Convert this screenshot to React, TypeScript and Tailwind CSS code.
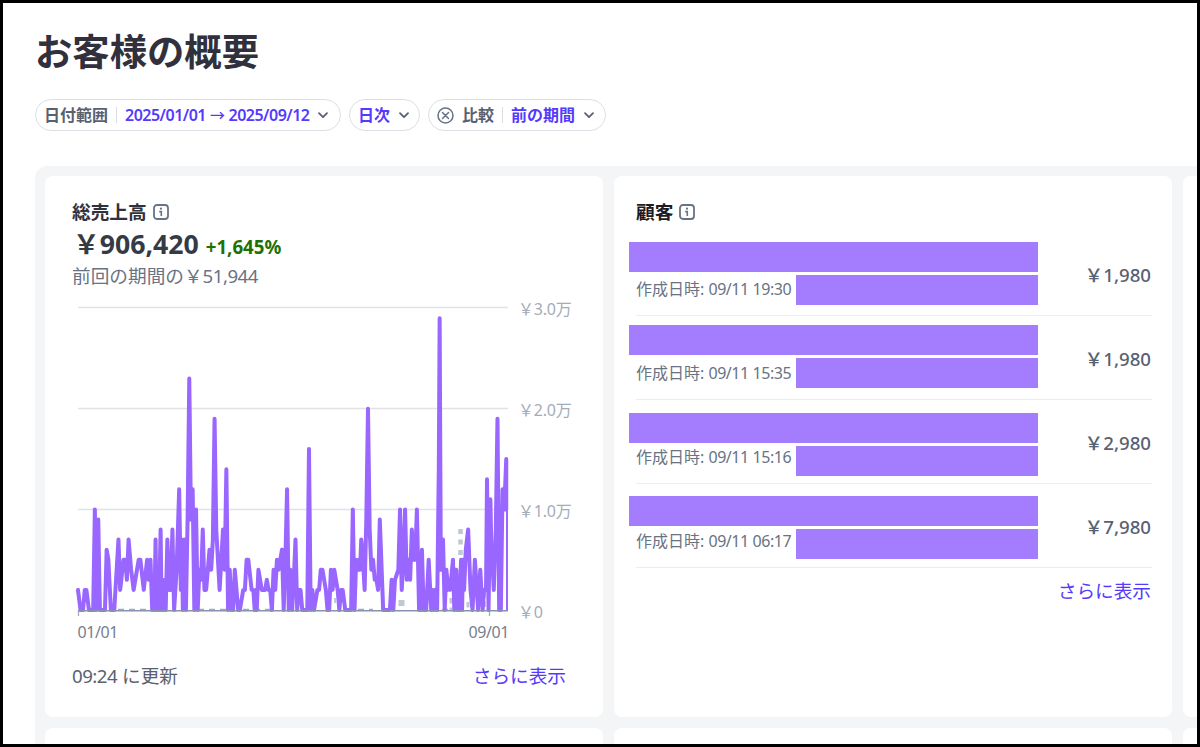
import type { ReactNode } from "react";

// [day index, sales in thousands of yen]
const SALES: [number, number][] = [
  [0, 2], [1.5, 0], [3, 0], [4, 2], [5, 2], [6.5, 0], [9, 0], [10, 10], [10.6, 0], [11.3, 8], [12, 9],
  [13, 0], [16, 0], [17, 6], [18, 5], [19.5, 0], [21.5, 0], [24, 7], [25, 2], [27, 5], [28, 5],
  [29, 3], [30, 7], [31.5, 4], [33, 2], [36, 5], [37, 5], [39, 2], [41, 5], [42, 3], [43, 5],
  [44, 0], [44.7, 3], [45.3, 0], [46, 7], [46.6, 0], [47.3, 4], [48, 0], [49, 8], [49.6, 0], [50.3, 3], [51, 0], [51.6, 2], [52, 0], [53, 7],
  [54, 2], [55, 2], [56, 8], [57, 0], [58.5, 4], [60, 12], [61, 2], [61.6, 7], [62.2, 0], [63, 7], [64, 0], [65, 9], [66, 23],
  [67, 9], [68, 12], [69, 0], [70, 10], [71, 0], [72, 4], [73, 3], [74, 8], [75, 2], [76, 2],
  [78, 6], [79, 4], [80, 7], [81, 19], [82, 8], [84, 2], [86, 8], [87, 4], [88, 14], [89, 0], [90, 4],
  [91, 0], [92, 0], [93, 4], [95, 0], [96, 0], [98, 2], [99, 2], [100, 5], [101, 5], [103, 2], [104, 2], [104.8, 0],
  [105.4, 2], [106, 0], [107, 4], [109, 2], [111, 2], [112, 3], [113, 2], [114, 2], [115, 0], [116, 4],
  [117, 2], [118, 5], [119, 4], [120, 5], [121, 6], [122, 0], [123, 5], [124, 12], [125, 0], [126, 4], [127, 0], [128, 3],
  [129, 7], [130, 0], [131, 2], [132, 2], [133, 0], [136, 0], [137, 16], [138, 0], [139, 2], [140, 0],
  [142, 2], [143, 2], [144, 4], [145, 4], [147, 2], [148, 0], [149, 0], [150, 4], [151, 2], [152, 4],
  [154, 2], [155, 0], [156, 2], [157, 2], [158.5, 0], [162, 0], [163, 10], [164, 0], [165, 5], [166, 4], [166.6, 5],
  [167.3, 4], [168, 7], [169, 5], [170, 2], [171, 9], [172, 20], [173, 8], [174, 4], [175, 5], [176, 3], [177, 3],
  [178, 2], [179, 9], [181, 0], [185, 0], [186, 3], [187, 0], [188, 3], [190, 4], [191, 10], [192, 2],
  [193, 5], [194, 10], [195, 3], [196, 5], [197, 3], [198, 8], [199, 5], [200, 5], [201, 10], [202.3, 0], [202.8, 4], [203.3, 0], [204, 6],
  [205, 0], [206.5, 0], [208, 5], [209.5, 0], [210.3, 2], [211, 0], [212, 2], [213, 0], [214, 14], [214.5, 29], [215.2, 4], [215.7, 7], [216.5, 7],
  [217.5, 0], [218.5, 4], [219.5, 2], [220, 3], [220.7, 2], [221.3, 3], [222.4, 5], [223.2, 0], [223.8, 4], [224.4, 4], [225, 0], [225.6, 3],
  [226.2, 0], [227.2, 5], [227.8, 0], [228.4, 5], [229, 2], [230, 6], [231.4, 8], [232.8, 2], [234, 0], [235.4, 5], [237.3, 0], [238.6, 4], [240, 0], [240.8, 2],
  [242, 2], [242.6, 13], [243.5, 0], [244.2, 8], [244.6, 11], [245.3, 5], [246, 4], [246.6, 2], [247.8, 8], [248.8, 19], [249.8, 0], [250.8, 0], [251.8, 12],
  [252.8, 10], [254, 15], [254, 10],
];

const points = SALES.map(([day, value]) => `${5 + day * 1.686},${308 - value * 10.06}`).join(" ");

const AXIS = ["￥3.0万", "￥2.0万", "￥1.0万", "￥0"];

const CUSTOMERS = [
  { date: "09/11 19:30", amount: "￥1,980", mask: "top-[10px]" },
  { date: "09/11 15:35", amount: "￥1,980", mask: "top-[9px]" },
  { date: "09/11 15:16", amount: "￥2,980", mask: "top-[13px]" },
  { date: "09/11 06:17", amount: "￥7,980", mask: "top-[12px]" },
];

function Chevron() {
  return (
    <svg className="shrink-0" width="12" height="12" viewBox="0 0 12 12" fill="none" stroke="#596171" strokeWidth="1.8" strokeLinecap="round" strokeLinejoin="round">
      <path d="M2 4.2 6 8.2 10 4.2" />
    </svg>
  );
}

function InfoIcon() {
  return (
    <svg width="16" height="16" viewBox="0 0 16 16" fill="none" stroke="#687385" strokeWidth="1.8">
      <rect x="1" y="1" width="14" height="14" rx="3" />
      <path d="M6.2 7.6H8.3V12" strokeWidth="1.6" />
      <circle cx="8" cy="4.7" r="1.1" fill="#687385" stroke="none" />
    </svg>
  );
}

function Pill({ className, children }: { className: string; children: ReactNode }) {
  return (
    <div className={`flex h-8 items-center rounded-full border border-[#dcdfe4] text-base font-semibold whitespace-nowrap text-[#596171] ${className}`}>
      {children}
    </div>
  );
}

function Divider() {
  return <span className="mx-2 h-4 w-px bg-[#d8dee4]" />;
}

function SalesChart() {
  return (
    <div className="flex h-[344px]">
      <svg className="shrink-0" width="442" height="344" viewBox="0 0 442 344" fill="none">
        <path d="M5 5.5H435M5 106.5H435M5 207.5H435" stroke="#e0e2e8" strokeWidth="1.6" />
        <path d="M5.5 308V314M416.5 308V314" stroke="#a3acba" strokeWidth="1.3" />
        <path d="M387.5 227V256" stroke="#c0c8d2" strokeWidth="4.5" strokeDasharray="5 5.5" />
        <path d="M328.5 298V304" stroke="#c0c8d2" strokeWidth="6" />
        <path d="M378 296V308M395 300V308M411.5 290V308" stroke="#c0c8d2" strokeWidth="3" strokeDasharray="5.5 4" />
        <path d="M262 296V301" stroke="#c0c8d2" strokeWidth="2" />
        <path d="M45 307.5H75M125 307.5H155M170 307.5H200M285 307.5H300M358 307.5H380" stroke="#a3acba" strokeWidth="1.5" strokeDasharray="6 5" />
        <polyline points={points} stroke="#9966ff" strokeWidth="4" strokeLinecap="round" strokeLinejoin="round" />
        <path d="M434 160V308" stroke="#9966ff" strokeWidth="2" />
        <path d="M5 308.8H435" stroke="#8792b2" strokeWidth="1.5" />
        <g fill="#77808f" fontSize="16">
          <text x="4.5" y="336" textLength="41">01/01</text>
          <text x="395.5" y="336" textLength="41">09/01</text>
        </g>
      </svg>
      <div className="-mt-[43px] flex flex-col pl-[3px] text-base leading-[101px] tracking-[-0.2px] text-[#a3acba]">
        {AXIS.map((label) => (
          <span key={label} className="h-[101px] whitespace-nowrap">{label}</span>
        ))}
      </div>
    </div>
  );
}

function SalesCard() {
  return (
    <section className="flex h-[541px] flex-col rounded-lg bg-white pl-7 pr-[37px] pt-6">
      <div className="-ml-px flex h-[23px] items-center gap-1.5 text-[18.67px] font-semibold text-[#30313d]">
        総売上高
        <InfoIcon />
      </div>
      <div className="flex h-[42px] items-baseline gap-[7px] font-bold leading-[42px]">
        <span className="text-[26.67px] text-[#353a44]">￥906,420</span>
        <span className="text-[18.67px] text-[#217005]">+1,645%</span>
      </div>
      <div className="-ml-px h-[37px] text-[18.67px] leading-[22px] text-[#687385]">
        前回の期間の￥<span className="tracking-[-0.5px]">51,944</span>
      </div>
      <SalesChart />
      <div className="-ml-px mt-4 flex h-7 items-center justify-between text-[18.67px] text-[#596171]">
        <span><span className="tracking-[-0.5px]">09:24</span> に更新</span>
        <span className="text-[#533afd]">さらに表示</span>
      </div>
    </section>
  );
}

function CustomerCard() {
  return (
    <section className="flex h-[541px] flex-col rounded-lg bg-white pl-[22px] pr-5 pt-6">
      <div className="flex h-6 items-center gap-1.5 text-[18.67px] font-semibold text-[#1a1b25]">
        顧客
        <InfoIcon />
      </div>
      <div className="mt-2">
        {CUSTOMERS.map((customer) => (
          <div key={customer.date} className="relative flex h-[84px] justify-between border-b border-[#ebeef1]">
            <span className="mt-[45px] text-base leading-6 text-[#687385]">
              作成日時: <span className="tracking-[-0.45px]">{customer.date}</span>
            </span>
            <span className="mr-px mt-[31px] text-[18.67px] font-medium leading-6 text-[#596171]">{customer.amount}</span>
            <div className={`absolute -left-[7px] flex w-[409px] flex-col items-end gap-[3px] ${customer.mask}`}>
              <div className="h-[30px] w-full bg-[#a47dff]" />
              <div className="h-[30px] w-[242px] bg-[#a47dff]" />
            </div>
          </div>
        ))}
      </div>
      <span className="mr-px mt-[9px] text-right text-[18.67px] leading-7 text-[#533afd]">さらに表示</span>
    </section>
  );
}

export default function App() {
  return (
    <div className="flex h-[747px] w-[1200px] flex-col overflow-hidden border-[3px] border-black bg-white pl-8 [font-family:'Noto_Sans','Noto_Sans_CJK_JP',sans-serif]">
      <h1 className="mt-[21px] h-[56px] text-[37.33px] font-bold leading-[56px] text-[#30313d]">お客様の概要</h1>
      <div className="mt-[19px] flex gap-2">
        <Pill className="w-[306px] pl-2">
          日付範囲
          <Divider />
          <span className="mr-[7px] flex items-center gap-1 tracking-[-0.5px] text-[#533afd]">
            <span>2025/01/01</span>
            <span className="text-[15px] font-medium">→</span>
            <span>2025/09/12</span>
          </span>
          <Chevron />
        </Pill>
        <Pill className="w-[71px] pl-2">
          <span className="mr-2 text-[#533afd]">日次</span>
          <Chevron />
        </Pill>
        <Pill className="w-[178px] pl-2">
          <svg className="mr-2" width="17" height="17" viewBox="0 0 17 17" fill="none" stroke="#687385" strokeWidth="1.5" strokeLinecap="round">
            <circle cx="8.5" cy="8.5" r="7.5" />
            <path d="M5.5 5.5 11.5 11.5M11.5 5.5 5.5 11.5" />
          </svg>
          比較
          <Divider />
          <span className="mr-2 text-[#533afd]">前の期間</span>
          <Chevron />
        </Pill>
      </div>
      <main className="mt-[35px] grid shrink-0 grid-cols-[558px_558px_558px] gap-[11px] rounded-tl-xl bg-[#f3f5f7] pl-2.5 pt-2.5">
        <SalesCard />
        <CustomerCard />
        <section className="rounded-lg bg-white" />
        <section className="h-20 rounded-lg bg-white" />
        <section className="rounded-lg bg-white" />
        <section className="rounded-lg bg-white" />
      </main>
    </div>
  );
}
